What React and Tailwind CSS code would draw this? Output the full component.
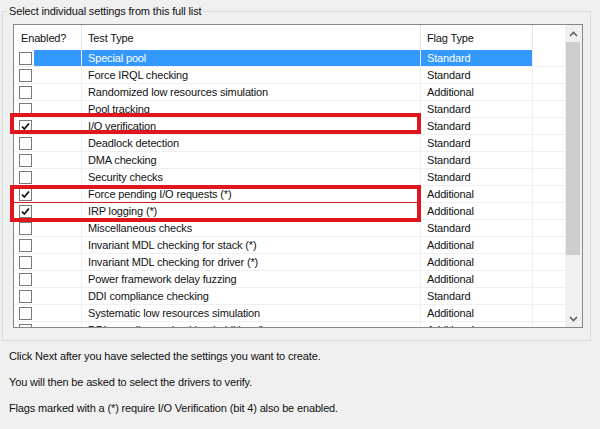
import React from 'react';

const rows = [
  ['Special pool', 'Standard', false],
  ['Force IRQL checking', 'Standard', false],
  ['Randomized low resources simulation', 'Additional', false],
  ['Pool tracking', 'Standard', false],
  ['I/O verification', 'Standard', true],
  ['Deadlock detection', 'Standard', false],
  ['DMA checking', 'Standard', false],
  ['Security checks', 'Standard', false],
  ['Force pending I/O requests (*)', 'Additional', true],
  ['IRP logging (*)', 'Additional', true],
  ['Miscellaneous checks', 'Standard', false],
  ['Invariant MDL checking for stack (*)', 'Additional', false],
  ['Invariant MDL checking for driver (*)', 'Additional', false],
  ['Power framework delay fuzzing', 'Additional', false],
  ['DDI compliance checking', 'Standard', false],
  ['Systematic low resources simulation', 'Additional', false],
  ['DDI compliance checking (additional)', 'Additional', false],
];

function CheckBox({ checked }) {
  return (
    <div className="w-[13px] h-[13px] border border-[#7a7a7a] bg-white flex items-center justify-center">
      {checked && (
        <svg width="11" height="11" viewBox="0 0 11 11">
          <path d="M2 5.5 L4.3 8 L9 2.5" fill="none" stroke="#111" strokeWidth="1.8" />
        </svg>
      )}
    </div>
  );
}

function Chevron({ up }) {
  return (
    <svg width="9" height="6" viewBox="0 0 9 6">
      <path d={up ? 'M1 5 L4.5 1.5 L8 5' : 'M1 1 L4.5 4.5 L8 1'} fill="none" stroke="#606060" strokeWidth="1.6" />
    </svg>
  );
}

function Row({ name, flag, checked, selected }) {
  return (
    <div className="flex h-[17px] shrink-0 border-b border-[#f0f0f0] leading-[16px]">
      <div className="w-[68px] flex items-center pl-[5px] border-r border-[#f0f0f0]">
        <CheckBox checked={checked} />
        {selected && <div className="ml-auto w-[47px] h-full bg-[#3399ff]" />}
      </div>
      <div className={`w-[339px] pl-[6px] border-r border-[#f0f0f0] whitespace-nowrap ${selected ? 'bg-[#3399ff] text-white' : ''}`}>
        {name}
      </div>
      <div className={`w-[112px] pl-[6px] border-r border-[#f0f0f0] ${selected ? 'bg-[#3399ff] text-white' : ''}`}>
        {flag}
      </div>
      <div className="w-[32px]" />
    </div>
  );
}

export default function App() {
  return (
    <div className="relative w-[600px] h-[429px] overflow-hidden bg-[#f0f0f0] text-[11px] tracking-[-0.15px] text-[#111] font-['Liberation_Sans',Arial,sans-serif]">
      <fieldset className="ml-[2px] mt-[4px] w-[589px] h-[337px] border border-[#dcdcdc] pl-[10px] pt-[6px]">
        <legend className="ml-[-6px] px-[2px] leading-[14px]">Select individual settings from this full list</legend>

        <div className="w-[570px] h-[304px] border border-[#828790] bg-white flex">
          <div className="w-[551px] flex flex-col overflow-hidden">
            <div className="flex h-[25px] shrink-0 leading-[26px]">
              <div className="w-[68px] pl-[7px] border-r border-[#e5e5e5]">Enabled?</div>
              <div className="w-[339px] pl-[6px] border-r border-[#e5e5e5]">Test Type</div>
              <div className="w-[112px] pl-[6px] border-r border-[#e5e5e5]">Flag Type</div>
              <div className="w-[32px]" />
            </div>
            {rows.map(([name, flag, checked], i) => (
              <Row key={name} name={name} flag={flag} checked={checked} selected={i === 0} />
            ))}
          </div>

          <div className="w-[17px] bg-[#f0f0f0] flex flex-col">
            <div className="h-[17px] flex items-center justify-center">
              <Chevron up />
            </div>
            <div className="ml-[1px] w-[14px] h-[213px] bg-[#cdcdcd]" />
            <div className="flex-1" />
            <div className="h-[17px] flex items-center justify-center">
              <Chevron />
            </div>
          </div>
        </div>
      </fieldset>

      <div className="pl-[9px] pt-[8px] flex flex-col gap-[12px] leading-[14px]">
        <p>Click Next after you have selected the settings you want to create.</p>
        <p>You will then be asked to select the drivers to verify.</p>
        <p>Flags marked with a (*) require I/O Verification (bit 4) also be enabled.</p>
      </div>

      {/* annotation frames */}
      <div className="absolute left-[10px] top-[113px] w-[411px] h-[21px] border-[4px] border-[#e0161e]" />
      <div className="absolute left-[10px] top-[185px] w-[411px] h-[37px] border-[4px] border-[#e0161e]">
        <div className="mt-[13px] h-[1px] bg-[#e0161e]" />
      </div>
    </div>
  );
}
